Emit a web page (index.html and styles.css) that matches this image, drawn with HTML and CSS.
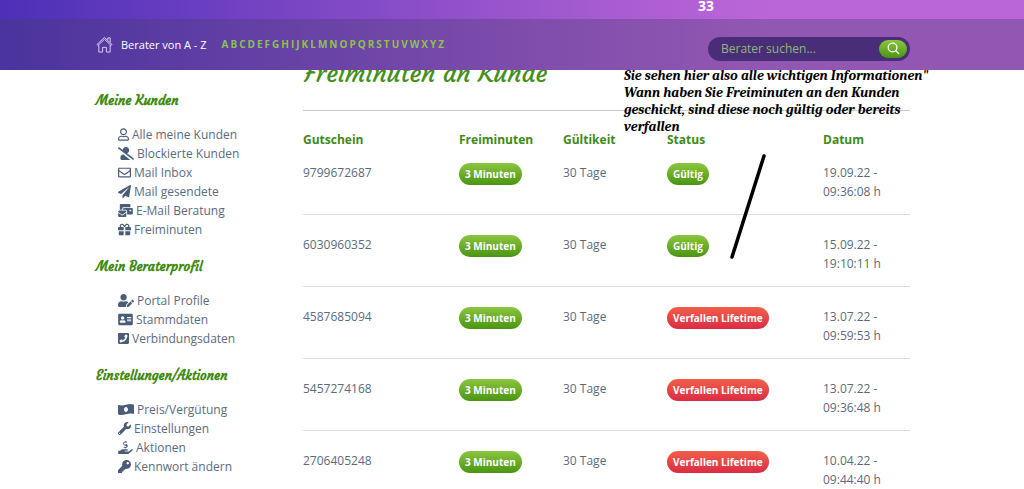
FILE: index.html
```html
<!DOCTYPE html>
<html lang="de">

<head>
    <meta charset="UTF-8" />
    <meta name="viewport" content="width=device-width, initial-scale=1.0" />
    <title>Freiminuten an Kunde</title>
    <link rel="stylesheet" href="styles.css">
</head>

<body>
    <header class="header">
        <div class="topbar">33</div>
        <div class="navbar">
            <a href="#" class="home" aria-label="Home">
                <svg viewBox="0 0 18 18"><path d="M1 9 9 1.5 17 9l-1 1-7-6.5L2 10zM3 9.5V17h4v-5h4v5h4V9.5M12.5 4V2h2.5v4.5" /></svg>
            </a>
            <a href="#" class="nav-title">Berater von A - Z</a>
            <nav class="letters">
                <a href="#">A</a><a href="#">B</a><a href="#">C</a><a href="#">D</a><a href="#">E</a><a href="#">F</a><a href="#">G</a><a href="#">H</a><a href="#">I</a><a href="#">J</a><a href="#">K</a><a href="#">L</a><a href="#">M</a><a href="#">N</a><a href="#">O</a><a href="#">P</a><a href="#">Q</a><a href="#">R</a><a href="#">S</a><a href="#">T</a><a href="#">U</a><a href="#">V</a><a href="#">W</a><a href="#">X</a><a href="#">Y</a><a href="#">Z</a>
            </nav>
            <form class="search">
                <input type="text" placeholder="Berater suchen..." aria-label="Berater suchen">
                <button type="submit" aria-label="Suchen">
                    <svg viewBox="0 0 14 14"><circle cx="6" cy="6" r="4.7" /><path d="M9.5 9.5 13 13" /></svg>
                </button>
            </form>
        </div>
    </header>

    <div class="page">
        <aside class="sidebar">
            <h3>Meine Kunden</h3>
            <ul>
                <li><a href="#"><svg class="w11" viewBox="0 0 448 512"><path d="M313.600 304c-28.700 0-42.500 16-89.600 16s-60.800-16-89.600-16C60.200 304 0 364.200 0 438.400V464c0 26.500 21.500 48 48 48h352c26.500 0 48-21.500 48-48v-25.600c0-74.200-60.200-134.400-134.400-134.400zM400 464H48v-25.600c0-47.600 38.800-86.400 86.400-86.400 14.600 0 38.300 16 89.600 16 51.700 0 74.900-16 89.600-16 47.600 0 86.400 38.800 86.400 86.400V464zM224 288c79.500 0 144-64.500 144-144S303.500 0 224 0 80 64.500 80 144s64.500 144 144 144zm0-240c52.900 0 96 43.100 96 96s-43.100 96-96 96-96-43.100-96-96 43.100-96 96-96z" /></svg>Alle meine Kunden</a></li>
                <li><a href="#"><svg class="w16" viewBox="0 0 640 512"><path d="M633.800 458.100 362.300 248.300C412.100 230.700 448 183.800 448 128 448 57.300 390.700 0 320 0c-67.100 0-121.500 51.800-126.900 117.400L45.500 3.400C38.500-2 28.500-.8 23 6.200L3.400 31.400c-5.400 7-4.200 17 2.800 22.400l588.400 454.700c7 5.400 17 4.200 22.500-2.800l19.600-25.300c5.400-6.800 4.100-16.900-2.900-22.300zM96 422.400V464c0 26.500 21.500 48 48 48h350.200L207.400 290.300C144.200 301.300 96 356 96 422.400z" /></svg>Blockierte Kunden</a></li>
                <li><a href="#"><svg class="w13" viewBox="0 0 512 512"><path d="M464 64H48C21.500 64 0 85.500 0 112v288c0 26.500 21.500 48 48 48h416c26.500 0 48-21.500 48-48V112c0-26.500-21.500-48-48-48zm0 48v40.800c-22.400 18.300-58.200 46.700-134.600 106.500C312.600 272.500 279.200 304.400 256 304c-23.200.4-56.600-31.500-73.400-44.700C106.200 199.500 70.400 171.100 48 152.800V112h416zM48 400V214.400c22.900 18.300 55.400 43.900 104.900 82.600C174.800 314.200 213 352.200 256 352c42.700.2 80.500-37.200 103.100-54.900 49.500-38.800 82-64.400 104.900-82.700V400H48z" /></svg>Mail Inbox</a></li>
                <li><a href="#"><svg class="w13" viewBox="0 0 512 512"><path d="M476 3.200 12.500 270.600c-18.100 10.400-15.800 35.600 2.200 43.200L121 358.400l287.300-253.200c5.500-4.900 13.300 2.600 8.600 8.300L176 407v80.500c0 23.600 28.500 32.900 42.500 15.800L282 426l124.600 52.200c14.200 6 30.400-2.900 33-18.200l72-432C515 7.800 493.300-6.800 476 3.200z" /></svg>Mail gesendete</a></li>
                <li><a href="#"><svg class="w15" viewBox="0 0 576 512"><path d="M160 448c-25.600 0-51.200-22.400-64-32-64-44.800-83.200-60.800-96-70.400V480c0 17.700 14.300 32 32 32h256c17.700 0 32-14.300 32-32V345.600c-12.800 9.600-32 25.600-96 70.400-12.800 9.600-38.400 32-64 32zm128-192H32c-17.700 0-32 14.300-32 32v16c25.600 19.200 22.400 19.200 115.200 86.400 9.600 6.400 28.800 25.600 44.800 25.600s35.200-19.200 44.800-22.400C297.600 323.200 294.400 323.200 320 304v-16c0-17.700-14.300-32-32-32zm256-96H224c-17.700 0-32 14.300-32 32v32h96c33.200 0 60.600 25.400 63.700 57.800l.3 134.200h192c17.700 0 32-14.300 32-32V192c0-17.700-14.300-32-32-32zm-32 128h-64v-64h64v64zM192 128h288V32c0-17.700-14.300-32-32-32H96C78.300 0 64 14.300 64 32v192h96v-32c0-35.300 14.400-64 32-64z" /></svg>E-Mail Beratung</a></li>
                <li><a href="#"><svg class="w13" viewBox="0 0 512 512"><path d="M32 448c0 17.700 14.300 32 32 32h160V320H32v128zm256 32h160c17.700 0 32-14.300 32-32V320H288v160zm192-320h-42.100c6.200-12.100 10.100-25.500 10.100-40 0-48.500-39.500-88-88-88-41.600 0-68.500 21.300-103 68.300C222.500 53.300 195.600 32 154 32c-48.500 0-88 39.500-88 88 0 14.500 3.800 27.900 10.100 40H32c-17.700 0-32 14.300-32 32v80c0 8.800 7.200 16 16 16h208V160h64v128h208c8.800 0 16-7.200 16-16v-80c0-17.700-14.300-32-32-32zm-326.100 0c-22.100 0-40-17.900-40-40s17.900-40 40-40c19.900 0 34.600 3.300 86.100 80h-86.100zm206.100 0h-86.100c51.400-76.500 65.700-80 86.100-80 22.100 0 40 17.900 40 40s-17.900 40-40 40z" /></svg>Freiminuten</a></li>
            </ul>
            <h3>Mein Beraterprofil</h3>
            <ul>
                <li><a href="#"><svg class="w16" viewBox="0 0 640 512"><path d="M224 256c70.700 0 128-57.300 128-128S294.700 0 224 0 96 57.300 96 128s57.300 128 128 128zm89.600 32h-16.700a174 174 0 0 1-145.800 0h-16.700C60.200 288 0 348.200 0 422.400V464c0 26.500 21.500 48 48 48h274.900c-2.400-6.800-3.400-14-2.600-21.300l6.800-60.900 1.200-11.100 7.900-7.900 77.300-77.300c-24.500-27.700-60-45.500-99.900-45.500zm45.300 145.300-6.800 61c-1.100 10.200 7.500 18.800 17.600 17.600l60.900-6.800 137.900-137.900-71.700-71.700-137.900 137.800zM633 268.900 595.100 231c-9.300-9.300-24.500-9.300-33.800 0l-41.900 41.800 71.800 71.700 41.800-41.800c9.300-9.400 9.300-24.500 0-33.800z" /></svg>Portal Profile</a></li>
                <li><a href="#"><svg class="w15" viewBox="0 0 576 512"><path d="M528 32H48C21.500 32 0 53.500 0 80v352c0 26.500 21.500 48 48 48h480c26.500 0 48-21.500 48-48V80c0-26.500-21.500-48-48-48zm-352 96c35.300 0 64 28.700 64 64s-28.700 64-64 64-64-28.700-64-64 28.700-64 64-64zm112 236.800c0 10.600-10 19.200-22.400 19.200H86.400C74 384 64 375.400 64 364.800v-19.200c0-31.800 30.100-57.600 67.200-57.600h5a103 103 0 0 0 79.600 0h5c37.100 0 67.200 25.800 67.200 57.600v19.200zM512 320H352v-32h160v32zm0-64H352v-32h160v32zm0-64H352v-32h160v32z" /></svg>Stammdaten</a></li>
                <li><a href="#"><svg class="w11" viewBox="0 0 448 512"><path d="M400 32H48C21.500 32 0 53.500 0 80v352c0 26.500 21.500 48 48 48h352c26.500 0 48-21.500 48-48V80c0-26.500-21.500-48-48-48zM94 416c-7 0-13.100-4.900-14.600-11.600l-15-65c-1.700-7.100 2.100-14.300 8.700-17.200l70-30c6.100-2.600 13.200-.9 17.500 4.300l31 37.900a231.700 231.700 0 0 0 110.800-110.800l-37.900-31c-5.200-4.200-6.900-11.400-4.300-17.500l30-70c2.800-6.700 10-10.300 17.200-8.700l65 15c6.700 1.600 11.600 7.600 11.600 14.600C384 286.700 254.300 416 94 416z" /></svg>Verbindungsdaten</a></li>
            </ul>
            <h3>Einstellungen/Aktionen</h3>
            <ul>
                <li><a href="#"><svg class="w16" viewBox="0 0 640 512"><path d="M621.200 54.500C582.400 38.200 543.600 32 504.800 32c-123.200-.2-246.400 61.700-369.600 61.700-30.900 0-61.800-3.900-92.700-13.700C21.300 73.300 0 88.600 0 110.800v317.300c0 12.600 7.200 24.600 18.800 29.500C57.600 473.800 96.400 480 135.200 480c123.200 0 246.400-61.900 369.600-61.900 30.900 0 61.800 3.900 92.700 13.700 21.200 6.700 42.500-8.600 42.500-30.800V83.900c0-12.600-7.200-24.500-18.800-29.400zM320 352c-44.200 0-80-43-80-96s35.800-96 80-96 80 43 80 96-35.800 96-80 96z" /></svg>Preis/Vergütung</a></li>
                <li><a href="#"><svg class="w13" viewBox="0 0 512 512"><path d="M507.700 109.100c-2.200-9-13.500-12.100-20.100-5.500l-74.400 74.400-67.900-11.300-11.300-67.900 74.400-74.400c6.600-6.600 3.400-17.900-5.700-20.200-47.400-11.700-99.600.9-136.600 37.900-39.600 39.600-50.500 97.100-34.100 147.200L18.700 402.800c-25 25-25 65.500 0 90.500s65.500 25 90.500 0l213.200-213.200c50.100 16.700 107.500 5.700 147.400-34.200 37.100-37.100 49.700-89.300 37.900-136.800zM64 472c-13.300 0-24-10.700-24-24s10.700-24 24-24 24 10.700 24 24-10.700 24-24 24z" /></svg>Einstellungen</a></li>
                <li><a href="#"><svg class="w15" viewBox="0 0 576 512"><path d="M271 144 257 140c-20-6-34-27-29-50 3-20 21-34 41-34h35c12 0 24 4 33 11l23-26c-13-10-28-16-44-18V0h-38v22c-42 1-79 27-84 69-5 40 20 75 57 86l58 17c22 7 20 46-8 46h-35c-12 0-24-4-33-11l-24 26c13 10 29 17 45 18v23h38v-23c42-1 78-28 84-69 5-40-20-74-57-85zM565 328c-12-11-30-10-43 0l-92 73c-11 10-25 15-40 15H272c-9 0-16-7-16-16s7-16 16-16h78c16 0 31-11 33-27 4-20-12-37-31-37H192c-27 0-53 9-74 26l-46 38H16c-9 0-16 7-16 16v96c0 9 7 16 16 16h357c14 0 28-5 40-14l151-121c15-12 16-35 1-49z" /></svg>Aktionen</a></li>
                <li><a href="#"><svg class="w13" viewBox="0 0 512 512"><path d="M512 176c0 97.200-78.800 176-176 176-11.200 0-22.200-1.100-32.800-3.100l-24 27a24 24 0 0 1-18 8.100H224v40c0 13.300-10.700 24-24 24h-40v40c0 13.300-10.700 24-24 24H24c-13.300 0-24-10.700-24-24v-78.100c0-6.400 2.500-12.500 7-17l161.800-161.800A175.700 175.700 0 0 1 160 176C160 78.800 238.800 0 336 0s176 78.500 176 176zm-176-48c0 26.500 21.500 48 48 48s48-21.500 48-48-21.500-48-48-48-48 21.500-48 48z" /></svg>Kennwort ändern</a></li>
            </ul>
        </aside>

        <main class="content">
            <h1>Freiminuten an Kunde</h1>
            <table>
                <colgroup>
                    <col class="col-wide">
                    <col class="col-small">
                    <col class="col-small">
                    <col class="col-wide">
                    <col>
                </colgroup>
                <thead>
                    <tr>
                        <th>Gutschein</th>
                        <th>Freiminuten</th>
                        <th>Gültikeit</th>
                        <th>Status</th>
                        <th>Datum</th>
                    </tr>
                </thead>
                <tbody>
                    <tr>
                        <td>9799672687</td>
                        <td><span class="badge">3 Minuten</span></td>
                        <td>30 Tage</td>
                        <td><span class="badge">Gültig</span></td>
                        <td>19.09.22 -<br>09:36:08 h</td>
                    </tr>
                    <tr>
                        <td>6030960352</td>
                        <td><span class="badge">3 Minuten</span></td>
                        <td>30 Tage</td>
                        <td><span class="badge">Gültig</span></td>
                        <td>15.09.22 -<br>19:10:11 h</td>
                    </tr>
                    <tr>
                        <td>4587685094</td>
                        <td><span class="badge">3 Minuten</span></td>
                        <td>30 Tage</td>
                        <td><span class="badge badge-red">Verfallen Lifetime</span></td>
                        <td>13.07.22 -<br>09:59:53 h</td>
                    </tr>
                    <tr>
                        <td>5457274168</td>
                        <td><span class="badge">3 Minuten</span></td>
                        <td>30 Tage</td>
                        <td><span class="badge badge-red">Verfallen Lifetime</span></td>
                        <td>13.07.22 -<br>09:36:48 h</td>
                    </tr>
                    <tr>
                        <td>2706405248</td>
                        <td><span class="badge">3 Minuten</span></td>
                        <td>30 Tage</td>
                        <td><span class="badge badge-red">Verfallen Lifetime</span></td>
                        <td>10.04.22 -<br>09:44:40 h</td>
                    </tr>
                </tbody>
            </table>

            <!-- Hinweis über der Tabelle -->
            <p class="note">Sie sehen hier also alle wichtigen Informationen"<br>Wann haben Sie Freiminuten an den Kunden<br>geschickt, sind diese noch gültig oder bereits<br>verfallen</p>
            <svg class="note-line" viewBox="0 0 36 106"><path d="M34 2 2 103" /></svg>
        </main>
    </div>
</body>

</html>
```
FILE: styles.css
```css
* {
    box-sizing: border-box;
}

body {
    margin: 0;
    background-color: white;
    color: #5a6b80;
    font-family: "Open Sans", sans-serif;
    font-size: 12px;
    line-height: 19px;
    overflow: hidden;
}

a {
    color: inherit;
    text-decoration: none;
}

.header {
    position: relative;
    z-index: 2;
    background: linear-gradient(90deg, #4c30b8 0%, #a65bd0 58%, #bb66d8 75%, #bb66d8 100%);
    color: white;
}

.topbar {
    padding: 0 310px 7px 0;
    font-size: 14px;
    font-weight: bold;
    line-height: 12px;
    text-align: right;
}

.navbar {
    display: flex;
    align-items: center;
    height: 51px;
    padding: 0 114px 0 96px;
    background-color: rgba(72, 60, 110, 0.35);
}

.home {
    display: flex;
    margin-right: 8px;
}

.home svg {
    width: 17px;
    height: 17px;
    fill: none;
    stroke: #e0d5f5;
}

.nav-title {
    margin-right: 15px;
    font-size: 11px;
}

.letters {
    display: flex;
    gap: 2px;
    color: #8cc152;
    font-size: 10px;
    font-weight: bold;
}

.search {
    display: flex;
    align-items: center;
    width: 202px;
    height: 24px;
    margin: 8px 0 0 auto;
    padding: 0 3px 0 13px;
    border-radius: 12px;
    background-color: #4a2d78;
}

.search input {
    flex: 1;
    min-width: 0;
    padding: 0;
    border: none;
    outline: none;
    background: none;
    color: #8cb878;
    font-family: inherit;
    font-size: 12px;
}

.search input::placeholder {
    color: #8cb878;
}

.search button {
    display: flex;
    align-items: center;
    justify-content: center;
    width: 28px;
    height: 18px;
    padding: 0;
    border: none;
    border-radius: 9px;
    background: linear-gradient(#8cc63f, #4a9412);
    cursor: pointer;
}

.search svg {
    width: 13px;
    height: 13px;
    fill: none;
    stroke: white;
    stroke-width: 1.4;
}

.page {
    display: flex;
    padding: 0 114px 0 96px;
}

.sidebar {
    flex: 0 0 207px;
    padding-top: 21px;
}

.sidebar h3 {
    margin: 0 0 15px;
    color: #3f8a10;
    font-family: Courgette, Lato, sans-serif;
    font-size: 13px;
    font-weight: bold;
}

.sidebar ul {
    margin: 0 0 18px;
    padding: 0 0 0 22px;
    list-style: none;
}

.sidebar a {
    display: flex;
    align-items: center;
    gap: 3px;
}

.sidebar svg {
    height: 13px;
    fill: #4a5d78;
}

.w11 {
    width: 11px;
}

.w13 {
    width: 13px;
}

.w15 {
    width: 15px;
}

.w16 {
    width: 16px;
}

.content {
    position: relative;
    flex: 1;
}

.content h1 {
    margin: -12px 0 0;
    padding-bottom: 20px;
    border-bottom: 1px solid #c8c8c8;
    color: #45901a;
    font-family: Courgette, "Open Sans", sans-serif;
    font-size: 25px;
    font-weight: 500;
    line-height: 32px;
}

table {
    width: 100%;
    table-layout: fixed;
    border-collapse: collapse;
}

.col-wide {
    width: 156px;
}

.col-small {
    width: 104px;
}

th {
    padding: 19px 0 0;
    color: #3f8a1a;
    font-weight: bold;
    text-align: left;
}

td {
    padding: 20px 0 13px;
    border-bottom: 1px solid #dcdcdc;
    vertical-align: top;
}

tbody tr:first-child td {
    padding-top: 14px;
}

.badge {
    display: inline-block;
    padding: 0 6px;
    border-radius: 11px;
    background: linear-gradient(#8cc63f, #4a9412);
    color: white;
    font-size: 10px;
    font-weight: bold;
    line-height: 22px;
    vertical-align: top;
}

.badge-red {
    background: linear-gradient(#f0604a, #dc2c44);
}

.note {
    position: absolute;
    top: -3px;
    left: 321px;
    margin: 0;
    color: black;
    font-family: Cambria, "Liberation Serif", serif;
    font-size: 14px;
    font-style: italic;
    font-weight: bold;
    line-height: 17px;
    white-space: nowrap;
}

.note-line {
    position: absolute;
    top: 84px;
    left: 427px;
    width: 36px;
    height: 106px;
    fill: none;
    stroke: black;
    stroke-width: 3.5;
    stroke-linecap: round;
}
```
